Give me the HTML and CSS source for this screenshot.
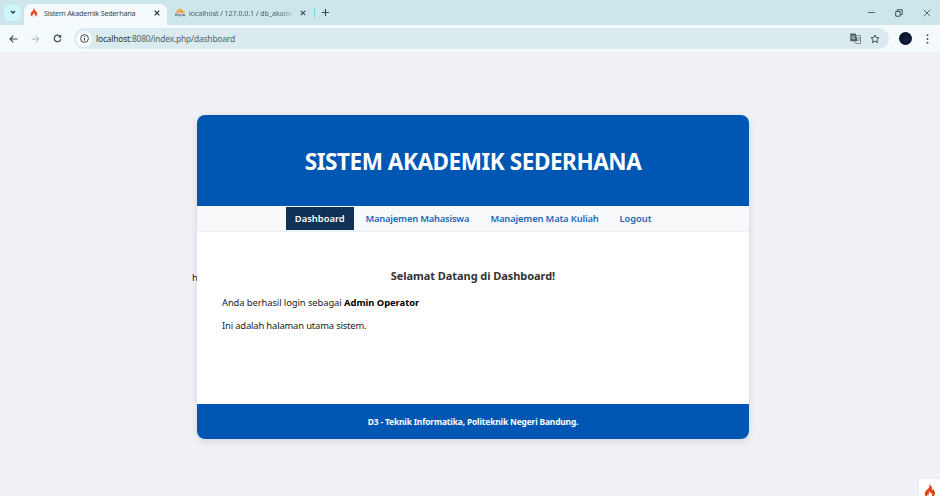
FILE: index.html
```html
<!DOCTYPE html>
<html lang="id">
<head>
<meta charset="utf-8">
<title>Sistem Akademik Sederhana</title>
<link rel="stylesheet" href="styles.css">
</head>
<body>
<svg class="defs" width="0" height="0" aria-hidden="true">
  <symbol id="flame" viewBox="0 0 12 14">
    <path fill="#dd4814" d="M5 .3C6 2.600 5 3.600 3.400 5.200 1.700 6.900.8 8 .8 9.800c0 1.800 1.200 3.200 3 3.800-1-1-1.200-2.300-.4-3.200.3 1 .8 1.300 1.400 1.100C4 9.800 5.200 9 5.500 7.300c1.200.8 1 1.700 1.300 2.500.5-.1.7-.5.8-.8.9 1.500.5 3.200-.8 4.600 2.500-.5 4.200-2.200 4.200-4.500C11 6.900 9.800 5.600 8.900 4.700c.1.9-.2 1.500-.8 1.900C8.400 3.600 7.500 1.500 5 .3z"/>
  </symbol>
</svg>
<div class="tabbar">
  <div class="search"><svg width="6" height="5" viewBox="0 0 6 5"><path d="M1 1l2 2 2-2" fill="none" stroke="#17343c" stroke-width="1.300"/></svg></div>
  <div class="tab active">
    <svg class="fav" width="8" height="9"><use href="#flame"/></svg>
    <span class="tabtitle">Sistem Akademik Sederhana</span>
    <svg class="close" width="6" height="6" viewBox="0 0 6 6"><path d="M.7.7l4.600 4.600M5.300.7L.7 5.300" stroke="#1d3035" stroke-width="1.200"/></svg>
  </div>
  <div class="tab second">
    <svg class="pma" width="11" height="9" viewBox="0 0 11 9"><path d="M4.500.3C2.800 1.500 1.800 3 1.400 5h3.100zM5.100.5V5h3.600C8 3 6.800 1.400 5.100.5zM8.300 2c1 .8 1.600 1.900 1.800 3H9.300z" fill="#f69a2b"/><path d="M.6 8.300V6h1.700v1.200H.8M3.600 8.300V6l1.100 1.300L5.900 6v2.300M7.100 8.300L8.200 6h.9l1 2.300M7.700 7.500h2" fill="none" stroke="#73778c" stroke-width=".9"/></svg>
    <span class="tabtitle faded">localhost / 127.0.0.1 / db_akade</span>
    <svg class="close" width="6" height="6" viewBox="0 0 6 6"><path d="M.8.8l4.400 4.400M5.200.8L.8 5.200" stroke="#3a5158" stroke-width="1.200"/></svg>
  </div>
  <i class="divider"></i>
  <svg class="plus" width="7" height="7" viewBox="0 0 7 7"><path d="M3.500 0v7M0 3.500h7" stroke="#304b52" stroke-width="1.100"/></svg>
  <div class="window">
    <svg width="7" height="8" viewBox="0 0 7 8"><path d="M0 3.500h7" stroke="#55666b"/></svg>
    <svg width="8" height="8" viewBox="0 0 8 8"><path d="M.7 2.500h4.500v4.700H.7zM2.300 2.300V.7h4.900v4.900H5.500" fill="none" stroke="#43545a"/></svg>
    <svg width="8" height="8" viewBox="0 0 8 8"><path d="M.7.700l6.600 6.600M7.300.7L.7 7.300" stroke="#4b5c61" stroke-width=".9"/></svg>
  </div>
</div>
<div class="toolbar">
  <svg class="nav-icon" width="9" height="8" viewBox="0 0 9 8"><path d="M8.500 4H1M4.300.7L1 4l3.300 3.300" fill="none" stroke="#344a50" stroke-width="1.100"/></svg>
  <svg class="nav-icon" width="9" height="8" viewBox="0 0 9 8"><path d="M.5 4H8M4.700.7L8 4 4.700 7.300" fill="none" stroke="#a3b0b5"/></svg>
  <svg class="nav-icon" width="9" height="9" viewBox="0 0 9 9"><path d="M7.300 2.600A3.300 3.300 0 1 0 7.800 5" fill="none" stroke="#344a50" stroke-width="1.200"/><path d="M8.200.6v3.200H5z" fill="#344a50"/></svg>
  <div class="address">
    <div class="info"><svg width="9" height="9" viewBox="0 0 9 9"><circle cx="4.500" cy="4.500" r="3.900" fill="none" stroke="#3d474a"/><path d="M4.500 4v2.700M4.500 2.200v1" stroke="#3d474a"/></svg></div>
    <span class="url"><b>localhost</b>:8080/index.php/dashboard</span>
    <svg class="translate" width="11" height="11" viewBox="0 0 11 11"><path d="M4.500 2.700h6v7.700H5.700L4.500 8.200" fill="#eef5f7" stroke="#5a6c72" stroke-width=".8"/><path d="M.3.500h5.400l2 7.800H.3z" fill="#4d5f65"/><path d="M4.800 3.600a1.500 1.500 0 1 0 .1 1.500H3.500" fill="none" stroke="#e5eff1" stroke-width=".8"/><path d="M7 5h3M8.500 4.200V5M9.600 5c-.4 1.400-1.100 2.300-2 2.900M7.800 6.200l1.700 1.900" fill="none" stroke="#5a6c72" stroke-width=".6"/></svg>
    <svg class="star" width="10" height="10" viewBox="0 0 10 10"><path d="M5 1l1.200 2.500 2.800.3-2.100 1.900.6 2.900L5 7.200 2.500 8.600l.6-2.900L1 3.800l2.800-.3z" fill="none" stroke="#405258" stroke-width="1"/></svg>
  </div>
  <div class="avatar"></div>
  <svg class="dots" width="3" height="10" viewBox="0 0 3 10"><g fill="#3f5056"><circle cx="1.500" cy="1.200" r=".95"/><circle cx="1.500" cy="5" r=".95"/><circle cx="1.500" cy="8.800" r=".95"/></g></svg>
</div>
<main class="page">
  <span class="stray">h</span>
  <div class="card">
    <header class="head"><h1>SISTEM AKADEMIK SEDERHANA</h1></header>
    <nav class="menu">
      <a class="current">Dashboard</a><a class="m1">Manajemen Mahasiswa</a><a class="m2">Manajemen Mata Kuliah</a><a class="m3">Logout</a>
    </nav>
    <section class="content">
      <h2>Selamat Datang di Dashboard!</h2>
      <p><span class="l1">Anda berhasil login sebagai</span> <strong>Admin Operator</strong></p>
      <p class="l2">Ini adalah halaman utama sistem.</p>
    </section>
    <footer class="foot"><span>D3 - Teknik Informatika, Politeknik Negeri Bandung.</span></footer>
  </div>
  <div class="debug"><svg width="12" height="14"><use href="#flame"/></svg></div>
</main>
</body>
</html>
```
FILE: styles.css
```css
* { box-sizing: border-box; }
body { margin: 0; width: 940px; height: 496px; overflow: hidden; background: #f0f1f6; font-family: "Noto Sans", "Open Sans", sans-serif; color: #222; }
svg { display: block; flex: none; }
.defs { position: absolute; }
.tabbar { height: 25px; background: #cde6eb; display: flex; align-items: center; padding-left: 4px; }
.search { width: 17px; height: 16px; border-radius: 6px; background: #cff7fd; display: grid; place-items: center; }
.tab { display: flex; align-items: center; height: 21px; margin-top: 4px; padding-bottom: 4px; }
.active { width: 143px; margin-left: 3px; padding-left: 6px; padding-right: 7px; background: #f5fbfd; border-radius: 7px 7px 0 0; }
.second { width: 139px; padding-left: 8px; }
.tabtitle { font-size: 7.200px; line-height: 12px; white-space: nowrap; margin-left: 6px; color: #35474d; letter-spacing: -.19px; }
.second .tabtitle { width: 103px; margin-left: 3px; color: #4b6067; letter-spacing: -.1px; mask-image: linear-gradient(90deg, #000 86%, transparent 104%); }
.close { margin-left: auto; }
.second .close { margin-left: 8px; }
.divider { width: 1px; height: 10px; margin-left: 8px; background: #75d8e9; }
.plus { margin-left: 7px; }
.window { margin-left: auto; display: flex; gap: 20px; padding-right: 9px; }
.toolbar { height: 28px; background: #f5fbfd; border-bottom: 1px solid #e4ecef; display: flex; align-items: center; padding-left: 9px; }
.nav-icon { margin-right: 13px; }
.address { width: 815px; height: 21px; border-radius: 11px; background: #dbeaef; display: flex; align-items: center; padding: 0 9px 0 2px; margin-left: -1px; }
.info { width: 16px; height: 16px; border-radius: 50%; background: #f7fcfd; display: grid; place-items: center; }
.url { font-size: 8.500px; margin-left: 4px; color: #52646a; line-height: 14px; letter-spacing: -.23px; }
.url b { font-weight: 400; color: #263c43; }
.translate { margin-left: auto; }
.star { margin-left: 9px; }
.avatar { width: 13px; height: 13px; margin-left: 10px; border-radius: 50%; background: radial-gradient(circle at 55% 55%, #142349, #080e1d 75%); }
.dots { margin-left: 14px; }
.page { position: relative; height: 443px; padding-top: 61.500px; }
.card { position: relative; width: 552px; height: 324.500px; margin-left: 197px; border-radius: 8px; overflow: hidden; background: #fff; display: flex; flex-direction: column; box-shadow: 0 2px 7px rgba(0, 0, 0, .12); }
.head { height: 91px; background: #0056b3; display: grid; place-items: center; padding-top: 3px; }
h1 { margin: 0; font-size: 22.500px; line-height: 30px; letter-spacing: -.44px; color: #fff; white-space: nowrap; }
.menu { height: 26px; background: #f8f9fb; border-bottom: 1px solid #eceef1; display: flex; align-items: center; padding-left: 88.500px; font-size: 9.400px; font-weight: 600; color: #1d66b9; }
.menu a { white-space: nowrap; }
.menu .current { width: 68.500px; height: 23px; line-height: 23px; text-align: center; background: #103257; color: #fff; }
.m1 { margin-left: 11.500px; width: 104px; letter-spacing: -.2px; }
.m2 { margin-left: 21px; width: 108px; letter-spacing: -.16px; }
.m3 { margin-left: 21px; letter-spacing: -.06px; }
.content { flex: 1; padding: 36px 25px 0; font-size: 9.400px; }
h2 { margin: 0 0 12px; font-size: 11px; line-height: 16px; text-align: center; color: #333; letter-spacing: -.06px; }
p { margin: 0 0 9px; line-height: 14px; white-space: nowrap; }
.l1 { letter-spacing: -.08px; }
.l2 { letter-spacing: -.15px; }
strong { color: #000; letter-spacing: -.03px; }
.foot { height: 35.500px; background: #0056b3; color: #fff; font-size: 8.400px; font-weight: 700; letter-spacing: -.14px; display: grid; place-items: center; }
.stray { position: absolute; left: 192px; top: 218px; font-size: 9.400px; line-height: 14px; }
.debug { position: absolute; right: 0; bottom: 0; width: 21px; height: 17px; background: #fff; padding: 5px 0 0 5px; overflow: hidden; box-shadow: 0 0 3px rgba(0, 0, 0, .06); }
```
